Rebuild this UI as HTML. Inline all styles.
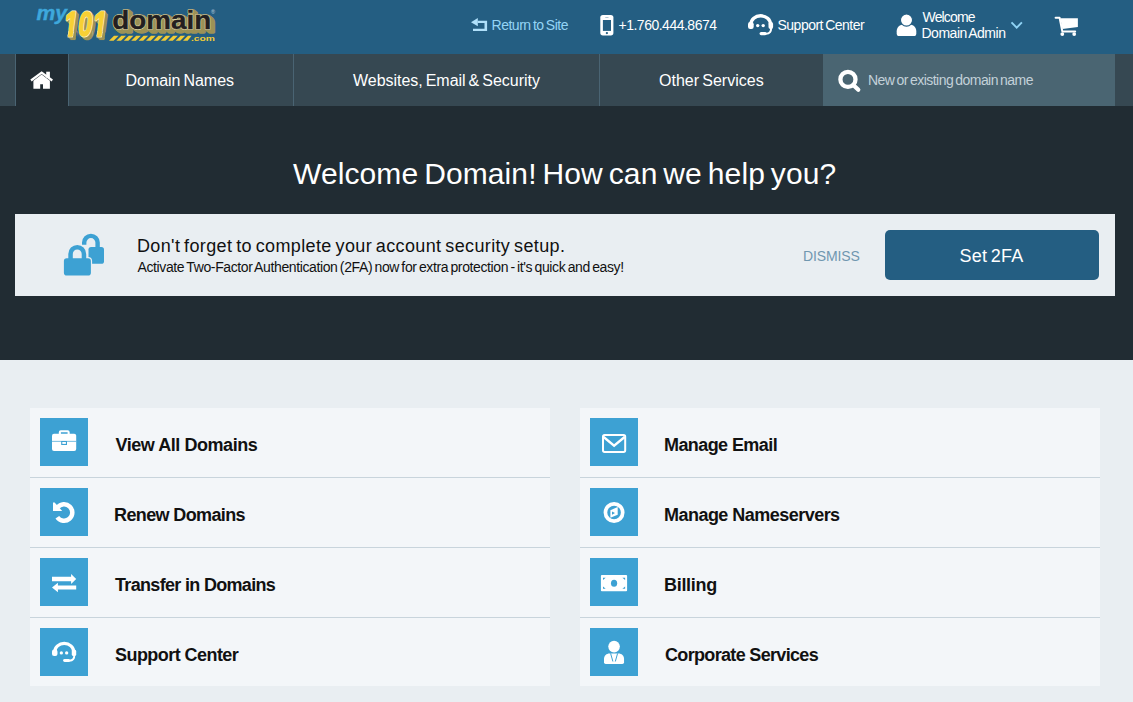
<!DOCTYPE html>
<html lang="en">
<head>
<meta charset="utf-8">
<title>my.101domain.com</title>
<style>
*{box-sizing:border-box;margin:0;padding:0}
html,body{width:1133px;height:702px;overflow:hidden}
body{background:#e9eef2;font-family:"Liberation Sans",sans-serif;color:#111;position:relative}
.t{position:absolute;white-space:nowrap;line-height:1;display:block;word-spacing:-0.085em}
svg{position:absolute;overflow:visible}
#hdr{position:absolute;left:0;top:0;width:1133px;height:54px;background:#245e82}
#nav{position:absolute;left:0;top:54px;width:1133px;height:52px;background:#364852}
#hero{position:absolute;left:0;top:106px;width:1133px;height:254px;background:#212c33}
.sep{position:absolute;top:54px;width:1px;height:52px;background:#4a6473}
#home{position:absolute;left:16px;top:54px;width:52px;height:52px;background:#212c33}
#search{position:absolute;left:823px;top:54px;width:292px;height:52px;background:#4a6572}
.nv{color:#fff;font-size:16px}
.hd{color:#fff;font-size:13px}
#alert{position:absolute;left:15px;top:214px;width:1100px;height:82px;background:#e9eef2}
#btn{position:absolute;left:885px;top:230px;width:214px;height:50px;background:#245e82;border-radius:5px}
.card{position:absolute;top:408px;width:520px;height:278px;background:#f3f6f9}
.ln{position:absolute;left:0;width:520px;height:1px;background:#c8d4dc}
.ico{position:absolute;width:48px;height:48px;background:#3da1d3}
.lbl{font-size:18px;font-weight:bold;color:#111;word-spacing:0}
/*FIT*/
#t1{left:491.50px;top:18.15px;letter-spacing:-0.477px;font-size:14px}
#t2{left:618.50px;top:18.15px;letter-spacing:-0.500px;font-size:14px}
#t3{left:777.50px;top:18.15px;letter-spacing:-0.508px;font-size:14px}
#t4{left:922.50px;top:10.15px;letter-spacing:-0.833px;font-size:14px}
#t5{left:921.50px;top:26.15px;letter-spacing:-0.491px;font-size:14px}
#t6{left:125.50px;top:73.46px;letter-spacing:-0.036px;font-size:16px}
#t7{left:353.00px;top:73.46px;letter-spacing:-0.032px;font-size:16px}
#t8{left:659.00px;top:73.46px;letter-spacing:0.015px;font-size:16px}
#t9{left:868.00px;top:73.15px;letter-spacing:-0.546px;font-size:14px}
#t10{left:293.00px;top:158.60px;letter-spacing:0.109px;font-size:30px}
#t11{left:137.00px;top:236.76px;letter-spacing:0.365px;font-size:18px}
#t12{left:137.50px;top:260.15px;letter-spacing:-0.379px;font-size:14px}
#t13{left:803.00px;top:249.15px;letter-spacing:-0.133px;font-size:14px}
#t14{left:959.50px;top:246.76px;letter-spacing:0.200px;font-size:18px}
#t15{left:115.50px;top:435.76px;letter-spacing:-0.453px;font-size:18px}
#t16{left:114.00px;top:505.76px;letter-spacing:-0.617px;font-size:18px}
#t17{left:115.00px;top:575.76px;letter-spacing:-0.678px;font-size:18px}
#t18{left:115.00px;top:645.76px;letter-spacing:-0.554px;font-size:18px}
#t19{left:664.00px;top:435.76px;letter-spacing:-0.582px;font-size:18px}
#t20{left:664.00px;top:505.76px;letter-spacing:-0.529px;font-size:18px}
#t21{left:664.00px;top:575.76px;letter-spacing:-0.300px;font-size:18px}
#t22{left:665.00px;top:645.76px;letter-spacing:-0.671px;font-size:18px}
/*ENDFIT*/
</style>
</head>
<body>
<div id="hdr"></div>
<div id="nav"></div>
<div id="hero"></div>
<div class="sep" style="left:15px"></div>
<div id="home"></div>
<div class="sep" style="left:68px"></div>
<div class="sep" style="left:293px"></div>
<div class="sep" style="left:599px"></div>
<div id="search"></div>

<!-- LOGO -->
<svg id="logo" width="230" height="54" viewBox="0 0 230 54" style="left:0;top:0" font-family="Liberation Sans, sans-serif" font-weight="bold">
  <defs><clipPath id="ca"><polygon points="-6.00,-40.00 24.67,-40.00 24.67,-6.35 13.86,-6.35 12.37,1.30 4.92,1.30 6.40,-6.35 -6.00,-6.35"/><polygon points="19.17,-40.00 44.33,-40.00 41.93,-8.00 39.13,3.00 19.17,3.00"/><polygon points="35.33,-40.00 66.00,-40.00 66.00,-6.35 55.19,-6.35 53.70,1.30 46.25,1.30 47.73,-6.35 35.33,-6.35"/></clipPath><clipPath id="cb"><polygon points="-6.00,-40.00 24.67,-40.00 24.67,-6.50 14.04,-6.50 12.49,1.45 4.73,1.45 6.28,-6.50 -6.00,-6.50"/><polygon points="19.17,-40.00 44.33,-40.00 41.93,-8.00 39.13,3.00 19.17,3.00"/><polygon points="35.33,-40.00 66.00,-40.00 66.00,-6.50 55.37,-6.50 53.82,1.45 46.06,1.45 47.61,-6.50 35.33,-6.50"/></clipPath><clipPath id="cc"><polygon points="-6.00,-40.00 24.67,-40.00 24.67,-5.80 13.19,-5.80 11.91,0.75 5.58,0.75 6.86,-5.80 -6.00,-5.80"/><polygon points="19.17,-40.00 44.33,-40.00 41.93,-8.00 39.13,3.00 19.17,3.00"/><polygon points="35.33,-40.00 66.00,-40.00 66.00,-5.80 54.52,-5.80 53.25,0.75 46.91,0.75 48.19,-5.80 35.33,-5.80"/></clipPath></defs>
  <!-- my -->
  <text x="36.4" y="19.5" font-size="20" font-style="italic" fill="#3ea8dc" stroke="#3ea8dc" stroke-width="0.4" textLength="30.5" lengthAdjust="spacingAndGlyphs">my</text>
  <!-- 101 -->
  <g font-size="35" font-style="italic" letter-spacing="1.2">
    <g fill="#9c9256" stroke="#9c9256" stroke-width="2.6" stroke-linejoin="round">
      <text transform="translate(65.0,37.1) scale(0.7,1)" clip-path="url(#ca)">101</text>
      <text transform="translate(65.9,38) scale(0.7,1)" clip-path="url(#ca)">101</text>
      <text transform="translate(66.8,38.9) scale(0.7,1)" clip-path="url(#ca)">101</text>
    </g>
    <text transform="translate(64.1,36.3) scale(0.7,1)" clip-path="url(#cb)" fill="#fff6cf" stroke="#fff6cf" stroke-width="2.9" stroke-linejoin="round">101</text>
    <text transform="translate(64.1,36.3) scale(0.7,1)" clip-path="url(#cc)" fill="#f7d034" stroke="#f7d034" stroke-width="1.5" stroke-linejoin="round">101</text>
  </g>
  <!-- domain -->
  <g font-size="28" transform="translate(112.2,29.2) scale(1,0.93)">
    <g fill="#9c9256" stroke="#9c9256" stroke-width="3.6" stroke-linejoin="round">
      <text x="1.3" y="1.1" textLength="99" lengthAdjust="spacingAndGlyphs">domain</text>
      <text x="2.6" y="2.2" textLength="99" lengthAdjust="spacingAndGlyphs">domain</text>
      <text x="3.9" y="3.3" textLength="99" lengthAdjust="spacingAndGlyphs">domain</text>
    </g>
    <text x="0" y="0" textLength="99" lengthAdjust="spacingAndGlyphs" fill="#e6deae" stroke="#e6deae" stroke-width="1.6" stroke-linejoin="round">domain</text>
    <text x="0" y="0" textLength="99" lengthAdjust="spacingAndGlyphs" fill="#231f20" stroke="#231f20" stroke-width="0.5">domain</text>
  </g>
  <!-- stripes -->
  <g fill="#f2cc35">
    <polygon points="109,40.8 113.6,40.8 118.6,35.7 114,35.7"/>
    <polygon points="116.4,40.8 121,40.8 126,35.7 121.4,35.7"/>
    <polygon points="123.8,40.8 128.4,40.8 133.4,35.7 128.8,35.7"/>
    <polygon points="131.2,40.8 135.8,40.8 140.8,35.7 136.2,35.7"/>
    <polygon points="138.6,40.8 143.2,40.8 148.2,35.7 143.6,35.7"/>
    <polygon points="146,40.8 150.6,40.8 155.6,35.7 151,35.7"/>
    <polygon points="153.4,40.8 158,40.8 163,35.7 158.4,35.7"/>
    <polygon points="160.8,40.8 165.4,40.8 170.4,35.7 165.8,35.7"/>
    <polygon points="168.2,40.8 172.8,40.8 177.8,35.7 173.2,35.7"/>
    <polygon points="175.6,40.8 180.2,40.8 185.2,35.7 180.6,35.7"/>
    <polygon points="183,40.8 187.6,40.8 191.6,35.7 188,35.7"/>
  </g>
  <text x="191" y="40.5" font-size="8" fill="#f2cc35" textLength="24" lengthAdjust="spacingAndGlyphs">.com</text>
  <text x="211" y="13.6" font-size="5.5" font-weight="normal" fill="#c3d5e2">®</text>
</svg>

<!-- HEADER ITEMS -->
<span class="t hd" id="t1" style="color:#94d4f5">Return to Site</span>
<span class="t hd" id="t2">+1.760.444.8674</span>
<span class="t hd" id="t3">Support Center</span>
<span class="t hd" id="t4">Welcome</span>
<span class="t hd" id="t5">Domain Admin</span>

<!-- NAV -->
<span class="t nv" id="t6">Domain Names</span>
<span class="t nv" id="t7">Websites, Email &amp; Security</span>
<span class="t nv" id="t8">Other Services</span>
<span class="t" id="t9" style="color:#c3d1d9">New or existing domain name</span>

<!-- HERO -->
<span class="t" id="t10" style="font-size:30px;color:#fff">Welcome Domain! How can we help you?</span>
<div id="alert"></div>
<span class="t" id="t11" style="font-size:18px;color:#111">Don't forget to complete your account security setup.</span>
<span class="t" id="t12" style="color:#111">Activate Two-Factor Authentication (2FA) now for extra protection - it's quick and easy!</span>
<span class="t" id="t13" style="color:#7097b0">DISMISS</span>
<div id="btn"></div>
<span class="t" id="t14" style="font-size:18px;color:#fff">Set 2FA</span>

<!-- CARDS -->
<div class="card" style="left:30px"><div class="ln" style="top:69px"></div><div class="ln" style="top:139px"></div><div class="ln" style="top:209px"></div></div>
<div class="card" style="left:580px"><div class="ln" style="top:69px"></div><div class="ln" style="top:139px"></div><div class="ln" style="top:209px"></div></div>
<div class="ico" style="left:40px;top:418px"></div>
<div class="ico" style="left:40px;top:488px"></div>
<div class="ico" style="left:40px;top:558px"></div>
<div class="ico" style="left:40px;top:628px"></div>
<div class="ico" style="left:590px;top:418px"></div>
<div class="ico" style="left:590px;top:488px"></div>
<div class="ico" style="left:590px;top:558px"></div>
<div class="ico" style="left:590px;top:628px"></div>
<span class="t lbl" id="t15">View All Domains</span>
<span class="t lbl" id="t16">Renew Domains</span>
<span class="t lbl" id="t17">Transfer in Domains</span>
<span class="t lbl" id="t18">Support Center</span>
<span class="t lbl" id="t19">Manage Email</span>
<span class="t lbl" id="t20">Manage Nameservers</span>
<span class="t lbl" id="t21">Billing</span>
<span class="t lbl" id="t22">Corporate Services</span>

<!-- ICONS -->
<svg id="ov" width="1133" height="702" viewBox="0 0 1133 702" style="left:0;top:0">

<!-- return -->
<g fill="#b0e0fa">
  <polygon points="471,22.2 477.8,17.9 477.8,26.2"/>
  <path d="M477.8 20.7 H487.1 V30.9 H473 V28.8 H484.5 V23 H477.8 Z"/>
</g>
<!-- phone -->
<rect x="600.3" y="14.9" width="13.1" height="20.5" rx="2.6" fill="#fff"/>
<rect x="602.9" y="20" width="8.1" height="10.9" fill="#245e82"/>
<circle cx="606.9" cy="33.1" r="1.15" fill="#245e82"/>
<rect x="605.3" y="17.1" width="3.2" height="0.8" fill="#245e82" opacity=".45"/>
<!-- headset header -->
<g transform="translate(747.5,14)">
<path d="M3.4 10.5 A9.8 8.7 0 0 1 23 10.5" fill="none" stroke="#fff" stroke-width="3.4"/>
  <rect x="0.5" y="8.1" width="5.7" height="6.8" rx="2.2" fill="#fff"/>
  <rect x="21" y="8.1" width="4.6" height="6.8" rx="2" fill="#fff"/>
  <path d="M23.6 13.5 Q24 19.7 18.5 19.7 H14" fill="none" stroke="#fff" stroke-width="2"/>
  <path d="M13.6 19.6 H17.6" fill="none" stroke="#fff" stroke-width="3.1" stroke-linecap="round"/>
  <circle cx="10.2" cy="11.6" r="1.7" fill="#fff"/>
  <circle cx="15.7" cy="11.6" r="1.7" fill="#fff"/>
</g>
<!-- user -->
<path d="M896.7 33.5 V31.2 C896.7 27 900 24.4 903.6 24.4 H909.4 C913 24.4 916.3 27 916.3 31.2 V33.5 Q916.3 36.05 913.8 36.05 H899.2 Q896.7 36.05 896.7 33.5 Z" fill="#fff"/>
<circle cx="906.5" cy="20.1" r="6.1" fill="#fff" stroke="#245e82" stroke-width="1.2"/>
<!-- chevron -->
<polyline points="1011.5,22.4 1016.7,27.6 1021.9,22.4" fill="none" stroke="#8fd3f5" stroke-width="1.9"/>
<!-- cart -->
<polygon points="1060.3,18.2 1077.9,18.2 1077.9,26.9 1062.4,29" fill="#fff"/>
<path d="M1055.6 17.7 H1059.6 L1062.3 31.4 H1075.2" fill="none" stroke="#fff" stroke-width="2" stroke-linejoin="round" stroke-linecap="round"/>
<circle cx="1062.3" cy="34.1" r="1.9" fill="#fff"/>
<circle cx="1074.2" cy="34.1" r="1.9" fill="#fff"/>
<!-- home -->
<path d="M31 80.5 L41.65 72.6 L52.3 80.5" fill="none" stroke="#fff" stroke-width="2.2"/>
<rect x="46.2" y="71.7" width="3.7" height="6" fill="#fff"/>
<polygon points="33.4,80.7 41.65,74.6 49.9,80.7 49.9,88.8 43,88.8 43,84.2 40.2,84.2 40.2,88.8 33.4,88.8" fill="#fff"/>
<!-- search -->
<circle cx="847.95" cy="79.4" r="7.55" fill="none" stroke="#fff" stroke-width="4.3"/>
<path d="M853.8 85.4 L858.3 89.8" stroke="#fff" stroke-width="4.2" stroke-linecap="round"/>
<!-- locks -->
<g>
  <rect x="88.5" y="246.9" width="15.5" height="16.9" rx="2.6" fill="#3da1d3"/>
  <path d="M84.2 244.8 V242.6 A6.7 6.7 0 0 1 97.6 242.6 V247.5" fill="none" stroke="#3da1d3" stroke-width="4.4"/>
  <rect x="63.9" y="258.2" width="27" height="17.4" rx="2.8" fill="#3da1d3" stroke="#e9eef2" stroke-width="2.4"/>
  <path d="M70.55 260 V253.95 A6.7 6.7 0 0 1 83.95 253.95 V260" fill="none" stroke="#e9eef2" stroke-width="6.8"/>
  <rect x="63.9" y="258.2" width="27" height="17.4" rx="2.8" fill="#3da1d3"/>
  <path d="M70.55 260 V253.95 A6.7 6.7 0 0 1 83.95 253.95 V260" fill="none" stroke="#3da1d3" stroke-width="4.5"/>
</g>
<!-- card icons: left -->
<g transform="translate(40,418)">
  <rect x="12" y="15.7" width="24.2" height="17.3" rx="2" fill="#fff"/>
  <path d="M19.85 16 V14.2 Q19.85 13.25 20.8 13.25 H27.7 Q28.65 13.25 28.65 14.2 V16" fill="none" stroke="#fff" stroke-width="2.1"/>
  <rect x="12" y="22.9" width="24.2" height="0.7" fill="#3da1d3"/>
  <rect x="21.2" y="23" width="5.8" height="4" fill="#3da1d3"/>
  <rect x="22.3" y="24" width="3.6" height="1.9" fill="#fff"/>
</g>
<g transform="translate(40,488)">
  <path d="M17.57 19.42 A8.25 8.25 0 1 1 17.31 29.23" fill="none" stroke="#fff" stroke-width="4.5"/>
  <polygon points="13,14.5 14.6,14.5 22.2,22.9 13,22.9" fill="#fff"/>
</g>
<g transform="translate(40,558)" fill="#fff">
  <polygon points="12,18.8 31.1,18.8 31.1,16.1 36.2,21.1 31.1,26 31.1,23.2 12,23.2"/>
  <polygon points="36.2,27.6 17.9,27.6 17.9,24.8 12,29.5 17.9,34.2 17.9,31.6 36.2,31.6"/>
</g>
<g transform="translate(51.5,641.7) scale(0.965)">
<path d="M3.4 10.5 A9.8 8.7 0 0 1 23 10.5" fill="none" stroke="#fff" stroke-width="3.4"/>
  <rect x="0.5" y="8.1" width="5.7" height="6.8" rx="2.2" fill="#fff"/>
  <rect x="21" y="8.1" width="4.6" height="6.8" rx="2" fill="#fff"/>
  <path d="M23.6 13.5 Q24 19.7 18.5 19.7 H14" fill="none" stroke="#fff" stroke-width="2"/>
  <path d="M13.6 19.6 H17.6" fill="none" stroke="#fff" stroke-width="3.1" stroke-linecap="round"/>
  <circle cx="10.2" cy="11.6" r="1.7" fill="#fff"/>
  <circle cx="15.7" cy="11.6" r="1.7" fill="#fff"/>
</g>
<!-- card icons: right -->
<g transform="translate(590,418)">
  <rect x="13" y="16.9" width="22.2" height="17" rx="1.6" fill="none" stroke="#fff" stroke-width="2"/>
  <polyline points="13.6,19 24.1,27.7 34.6,19" fill="none" stroke="#fff" stroke-width="2.3"/>
</g>
<g transform="translate(590,488)">
  <circle cx="24.07" cy="24.5" r="8.65" fill="none" stroke="#fff" stroke-width="3.7"/>
  <polygon points="20.4,22.2 27.7,19.1 27.7,26.7 20.4,29.7" fill="#fff"/>
  <polygon points="22,23.6 25,25.1 22,26.7" fill="#3da1d3"/>
</g>
<g transform="translate(590,558)">
  <rect x="10.9" y="17.1" width="26.2" height="16.1" rx="1" fill="#fff"/>
  <ellipse cx="24.07" cy="25.3" rx="3.1" ry="3.5" fill="#3da1d3"/>
  <g fill="#3da1d3">
    <polygon points="13,19.8 15.7,19.8 13,22"/>
    <polygon points="35.1,19.8 32.4,19.8 35.1,22"/>
    <polygon points="13,30.7 15.7,30.7 13,28.5"/>
    <polygon points="35.1,30.7 32.4,30.7 35.1,28.5"/>
  </g>
</g>
<g transform="translate(590,628)">
  <circle cx="24.07" cy="18.6" r="5.8" fill="#fff"/>
  <path d="M14 34.2 V31 C14 27.5 16.5 25.4 19.5 25.4 H28.6 C31.6 25.4 34.05 27.5 34.05 31 V34.2 Q34.05 35.9 32.3 35.9 H15.7 Q14 35.9 14 34.2 Z" fill="#fff"/>
  <path d="M20.6 25.4 L22.9 33.5 M27.6 25.4 L25.3 33.5" stroke="#3da1d3" stroke-width="1" fill="none"/>
</g>
</svg>

</body>
</html>
